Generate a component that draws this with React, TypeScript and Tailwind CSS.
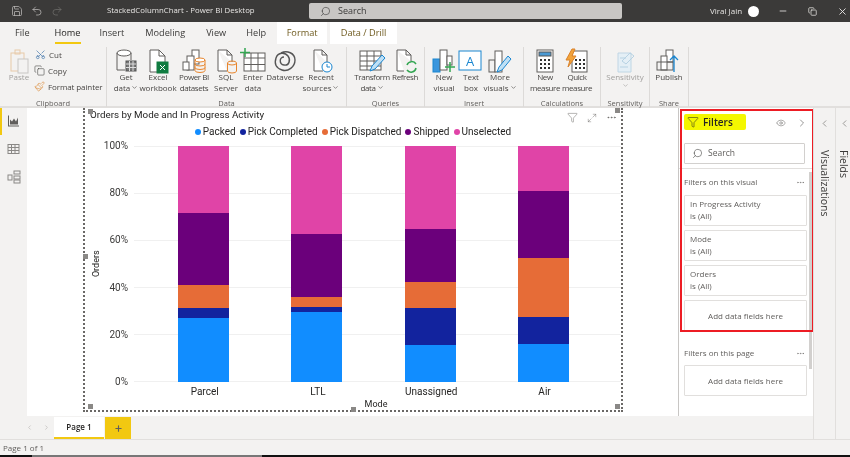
import React from 'react';
import { Minus, Redo2, Search, Undo2, X, Save, Copy, ChevronLeft, ChevronRight, ChevronDown, Eye, Filter, Scissors, Paintbrush, Plus, MoreHorizontal, Maximize2 } from 'lucide-react';

const font = { fontFamily: '"Open Sans", "Noto Sans", sans-serif' };

const PACKED = '#118dff';
const PICK_DONE = '#12239e';
const PICK_DISP = '#e66c37';
const SHIPPED = '#6b007b';
const UNSEL = '#e044a7';

const bars = [
  { name: 'Parcel', seg: [67, 72, 23, 10, 64] },
  { name: 'LTL', seg: [88, 63, 10, 5, 70] },
  { name: 'Unassigned', seg: [83, 53, 26, 37, 37] },
  { name: 'Air', seg: [45, 67, 59, 27, 38] },
];
const segColors = [UNSEL, SHIPPED, PICK_DISP, PICK_DONE, PACKED];

const legend = [
  { label: 'Packed', color: PACKED },
  { label: 'Pick Completed', color: PICK_DONE },
  { label: 'Pick Dispatched', color: PICK_DISP },
  { label: 'Shipped', color: SHIPPED },
  { label: 'Unselected', color: UNSEL },
];

const Ico = ({ children }: { children: React.ReactNode }) => (
  <svg width="28" height="26" viewBox="0 0 28 26" fill="none" stroke="#605e5c" strokeWidth="1">{children}</svg>
);

const icons: Record<string, React.ReactNode> = {
  get: (<><ellipse cx="12" cy="5" rx="7" ry="3" fill="#fff" /><path d="M5 5v17h8M19 5v7" /><rect x="14" y="13" width="10" height="10" fill="#777" stroke="#555" /><path d="M14 16h10M14 19.500h10M17.500 13v10M21 13v10" stroke="#ddd" /></>),
  excel: (<><path d="M6 2h9l6 6v16H6z" fill="#fff" /><path d="M15 2v6h6" /><rect x="13" y="14" width="11" height="11" fill="#107c41" stroke="#107c41" /><path d="M16 17l5 5M21 17l-5 5" stroke="#fff" /></>),
  pbi: (<><rect x="12" y="2" width="7" height="14" fill="#fff" /><rect x="7" y="8" width="7" height="14" fill="#fff" /><rect x="3" y="14" width="6" height="8" fill="#fff" /><ellipse cx="20" cy="12" rx="5" ry="2" fill="#fff" stroke="#e8852c" /><path d="M15 12v10.500a5 2 0 0 0 10 0V12M15 16a5 2 0 0 0 10 0M15 19.500a5 2 0 0 0 10 0" stroke="#e8852c" /></>),
  sql: (<><path d="M6 2h9l5 5v7M6 2v21h9M15 2v5h5" fill="#fff" /><ellipse cx="20" cy="15" rx="4.500" ry="2" stroke="#e8852c" /><path d="M15.500 15v8a4.500 2 0 0 0 9 0v-8" stroke="#e8852c" /></>),
  enter: (<><rect x="5" y="5" width="21" height="18" fill="#fff" /><path d="M5 10h21M5 16.500h21M12 5v18M19 5v18" /><path d="M6 0v9M1 4.500h10" stroke="#33a652" strokeWidth="1.500" /></>),
  dv: (<><path d="M10 5c6-3 14 0 14 7s-7 12-13 10S3 16 5 10s9-6 12-2 1 10-4 9-5-8 0-8" strokeWidth="1.400" stroke="#555" /></>),
  recent: (<><path d="M7 2h8l5 5v7M7 2v21h9M15 2v5h5" fill="#fff" /><circle cx="20" cy="19" r="5" fill="#fff" stroke="#1a86d0" /><path d="M20 16v3h3" stroke="#1a86d0" /></>),
  transform: (<><rect x="2" y="3" width="21" height="19" fill="#fff" /><path d="M2 8h21M2 13h21M2 18h21M9 3v19M16 3v19" /><path d="M12 23l2-5 10-11 3 3-10 11z" fill="#bfe0f5" stroke="#1a86d0" /></>),
  refresh: (<><path d="M6 2h9l5 5v6M6 2v21h7M15 2v5h5" fill="#fff" /><path d="M16 17a5 5 0 0 1 9-1M25 20a5 5 0 0 1-9 2" stroke="#33a652" strokeWidth="1.500" /></>),
  newv: (<><rect x="3" y="11" width="7" height="13" fill="#3a96dd" stroke="#1a86d0" /><rect x="10" y="2" width="7" height="20" fill="#fff" /><rect x="17" y="8" width="5" height="9" fill="#fff" /><path d="M20 14v10M15 19h10" stroke="#33a652" strokeWidth="1.500" /></>),
  text: (<><rect x="2" y="3" width="22" height="19" fill="#fff" stroke="#1a86d0" /><text x="13" y="18" textAnchor="middle" fontSize="13" fill="#1a86d0" stroke="none">A</text></>),
  more: (<><rect x="3" y="12" width="6" height="12" /><rect x="9" y="3" width="7" height="21" fill="#fff" /><path d="M11 24l2-5 9-11 3 3-9 11z" fill="#bfe0f5" stroke="#1a86d0" /></>),
  calc: (<><rect x="6" y="2" width="16" height="22" fill="#fff" /><rect x="8" y="4" width="12" height="4" fill="#4a9ad4" stroke="#555" /><path d="M9 12h2M13 12h2M17 12h2M9 16h2M13 16h2M17 16h2M9 20h2M13 20h2M17 20h2" stroke="#333" strokeWidth="2" /></>),
  quick: (<><rect x="9" y="3" width="15" height="21" fill="#fff" /><path d="M12 12h2M16 12h2M20 12h2M12 16h2M16 16h2M20 16h2M12 20h2M16 20h2M20 20h2" stroke="#333" strokeWidth="2" /><path d="M9 1L3 12h4l-2 7 8-11H9l3-7z" fill="#f2a33a" stroke="#d9822b" /></>),
  sens: (<><path d="M7 5h13v19H7z" fill="#e4eff6" stroke="#c0d6e4" /><path d="M11 13l8-8 4 3-8 8zM9 10h6M9 19h8" stroke="#b7d2e3" /></>),
  publish: (<><rect x="11" y="2" width="7" height="12" fill="#fff" /><rect x="6" y="8" width="6" height="14" fill="#fff" /><rect x="2" y="14" width="16" height="8" /><path d="M19 24V8M15 12l4-4 4 4" stroke="#1a86d0" strokeWidth="1.300" /></>),
};

const Item = ({ w, icon, lines, dim, chevron, tight }: { w: number; icon: string; lines: string[]; dim?: boolean; chevron?: boolean; tight?: boolean }) => (
  <div className="flex flex-col items-center shrink-0" style={{ width: w }}>
    <div className="h-[26px] flex items-center justify-center">
      <Ico>{icons[icon]}</Ico>
    </div>
    <div className={`-mt-[3px] text-[8px] leading-[11px] text-center whitespace-nowrap ${dim ? 'text-[#a19f9d]' : 'text-[#484644]'} ${tight ? 'tracking-[-0.4px]' : ''}`}>
      {lines.map((l, i) => (
        <div key={i} className="flex items-center justify-center gap-[1px]">
          {l}
          {chevron && i === lines.length - 1 && <ChevronDown size={7} strokeWidth={2} />}
        </div>
      ))}
    </div>
  </div>
);

const Group = ({ w, label, pl, children }: { w: number; label: string; pl: number; children: React.ReactNode }) => (
  <div className="flex flex-col border-r border-[#dcdad8] mt-[3px] h-[60px] shrink-0" style={{ width: w }}>
    <div className="flex flex-1 pt-[1px]" style={{ paddingLeft: pl }}>{children}</div>
    <div className="text-[7.500px] leading-[9px] text-center text-[#605e5c] -mb-[1px]">{label}</div>
  </div>
);

const FilterCard = ({ a, b }: { a: string; b: string }) => (
  <div className="h-[31px] bg-white border border-[#e1dfdd] rounded-[1px] px-[5px] pt-[2px] text-[8px] leading-[12px] text-[#605e5c] mb-[4px]">
    <div>{a}</div>
    <div>{b}</div>
  </div>
);

const AddCard = ({ h }: { h: string }) => (
  <div className={`${h} bg-white border border-[#e1dfdd] rounded-[1px] flex items-center justify-center text-[8px] text-[#605e5c]`}>
    Add data fields here
  </div>
);

const Handle = ({ className }: { className: string }) => (
  <div className={`absolute w-[5px] h-[5px] bg-[#8a8886] ${className}`} />
);

const Chart = () => (
  <div className="relative w-[540px] h-[304px] ml-[56px] border-2 border-t-0 border-dotted border-[#6a6866] flex flex-col" style={{ fontFamily: 'Roboto, "Open Sans", sans-serif' }}>
    <Handle className="left-[3px] top-[1px]" />
    <Handle className="left-[3px] bottom-[1px]" />
    <Handle className="right-[1px] top-[0px]" />
    <Handle className="right-[1px] bottom-[1px]" />
    <Handle className="left-[266px] -bottom-[2px]" />
    <Handle className="-left-[2px] top-[146px]" />
    <div className="absolute right-[4px] top-[4px] flex items-center gap-[9px] text-[#605e5c]">
      <Filter size={11} strokeWidth={1} />
      <Maximize2 size={10} strokeWidth={1} />
      <MoreHorizontal size={11} strokeWidth={1.500} />
    </div>
    <div className="pl-[5px] text-[9.800px] leading-[13px] text-[#252423]">Orders by Mode and In Progress Activity</div>
    <div className="flex justify-center gap-[4px] mt-[3px] h-[15px] items-center text-[10px] text-[#252423]">
      {legend.map(l => (
        <div key={l.label} className="flex items-center gap-[2px]">
          <span className="w-[6px] h-[6px] rounded-full" style={{ background: l.color }} />
          {l.label}
        </div>
      ))}
    </div>
    <div className="flex mt-[7px] pl-[6px]">
      <div className="w-[10px] flex items-center justify-center h-[236px]">
        <span className="-rotate-90 text-[9px] text-[#252423]">Orders</span>
      </div>
      <div className="w-[27px] h-[236px] flex flex-col justify-between items-end text-[10px] leading-[0px] text-[#3b3a39]">
        {['100%', '80%', '60%', '40%', '20%', '0%'].map(t => <span key={t}>{t}</span>)}
      </div>
      <div className="relative ml-[6px] w-[487px] h-[236px]">
        <div className="absolute inset-0 flex flex-col justify-between">
          {[0, 1, 2, 3, 4, 5].map(i => <div key={i} className="h-px bg-[#f0f0f0]" />)}
        </div>
        <div className="relative flex pl-[13px]">
          {bars.map(b => (
            <div key={b.name} className="w-[113.300px] flex justify-center">
              <div className="w-[51px] flex flex-col">
                {b.seg.map((h, i) => <div key={i} style={{ height: h, background: segColors[i] }} />)}
              </div>
            </div>
          ))}
        </div>
      </div>
    </div>
    <div className="flex pl-[63px] mt-[3px] text-[10px] leading-[14px] text-[#252423]">
      {bars.map(b => <div key={b.name} className="w-[113.300px] text-center">{b.name}</div>)}
    </div>
    <div className="text-center text-[9px] leading-[11px] text-[#252423] pl-[46px]">Mode</div>
  </div>
);

export default function App() {
  return (
    <div className="w-[850px] h-[457px] flex flex-col overflow-hidden bg-[#f3f2f1] blur-[0.25px]" style={font}>
      {/* title bar */}
      <div className="h-[22px] bg-[#3b3a39] flex items-center text-[#e6e4e2] shrink-0">
        <div className="flex items-center gap-[8px] ml-[11px] w-[96px]">
          <Save size={12} strokeWidth={1.500} color="#bdbbb9" />
          <Undo2 size={12} strokeWidth={1.500} color="#bdbbb9" />
          <Redo2 size={12} strokeWidth={1.500} color="#6f6d6b" />
        </div>
        <div className="text-[7.800px] w-[202px] whitespace-nowrap">StackedColumnChart - Power BI Desktop</div>
        <div className="w-[313px] h-[16px] bg-[#c8c6c4] rounded-[2px] flex items-center pl-[11px] gap-[7px] text-[#3b3a39] text-[9px]">
          <Search size={11} strokeWidth={1.300} className="-scale-x-100" />
          Search
        </div>
        <div className="ml-[88px] text-[8px] w-[38px] whitespace-nowrap">Viral Jain</div>
        <div className="w-[11px] h-[11px] rounded-full bg-white" />
        <Minus size={10} className="ml-[19px]" />
        <Copy size={9} className="ml-[20px]" />
        <X size={11} className="ml-[20px]" />
      </div>

      {/* tabs */}
      <div className="h-[22px] flex items-stretch text-[9.200px] text-[#3b3a39] shrink-0 bg-[#f3f2f1]">
        <div className="ml-[15px] flex items-center">File</div>
        <div className="ml-[25px] flex items-center relative font-medium text-[#252423]">
          Home
          <div className="absolute left-0 right-0 bottom-0 h-[2px] bg-[#f2c811]" />
        </div>
        <div className="ml-[19px] flex items-center">Insert</div>
        <div className="ml-[21px] flex items-center">Modeling</div>
        <div className="ml-[21px] flex items-center">View</div>
        <div className="ml-[20px] flex items-center">Help</div>
        <div className="ml-[11px] w-[50px] bg-white flex items-center justify-center text-[#6e5a1e] font-medium">Format</div>
        <div className="ml-[3px] w-[67px] bg-white flex items-center justify-center text-[#6e5a1e] font-medium">Data / Drill</div>
      </div>

      {/* ribbon */}
      <div className="h-[64px] flex shrink-0 bg-[#f3f2f1] border-b-2 border-[#e1dfdd]">
        <Group w={107} label="Clipboard" pl={5}>
          <div className="w-[28px] flex flex-col items-center">
            <svg width="22" height="26" viewBox="0 0 22 26" fill="none" stroke="#e8c9a8"><rect x="3" y="5" width="13" height="18" /><rect x="7" y="2" width="5" height="4" /><rect x="10" y="11" width="10" height="14" fill="#f3f2f1" stroke="#c8c6c4" /></svg>
            <div className="text-[8px] leading-[11px] -mt-[3px] text-[#a19f9d]">Paste</div>
          </div>
          <div className="flex flex-col gap-[2.500px] text-[8px] leading-[13.500px] text-[#484644] whitespace-nowrap pl-[1px]">
            <div className="flex items-center gap-[3px]"><Scissors size={11} strokeWidth={1.200} color="#1f5e9e" className="ml-[1px] -rotate-90" />Cut</div>
            <div className="flex items-center gap-[3px]"><Copy size={11} strokeWidth={1.200} color="#3b3a39" />Copy</div>
            <div className="flex items-center gap-[3px] tracking-[-0.1px]"><Paintbrush size={11} strokeWidth={1.200} color="#d9822b" />Format painter</div>
          </div>
        </Group>
        <Group w={240} label="Data" pl={3}>
          <Item w={32} icon="get" lines={['Get', 'data']} chevron />
          <Item w={32} icon="excel" lines={['Excel', 'workbook']} />
          <Item w={40} icon="pbi" lines={['Power BI', 'datasets']} tight />
          <Item w={24} icon="sql" lines={['SQL', 'Server']} />
          <Item w={30} icon="enter" lines={['Enter', 'data']} />
          <Item w={34} icon="dv" lines={['Dataverse']} />
          <Item w={38} icon="recent" lines={['Recent', 'sources']} chevron />
        </Group>
        <Group w={78} label="Queries" pl={7}>
          <Item w={36} icon="transform" lines={['Transform', 'data']} chevron tight />
          <Item w={30} icon="refresh" lines={['Refresh']} tight />
        </Group>
        <Group w={99} label="Insert" pl={5}>
          <Item w={28} icon="newv" lines={['New', 'visual']} />
          <Item w={26} icon="text" lines={['Text', 'box']} />
          <Item w={32} icon="more" lines={['More', 'visuals']} chevron />
        </Group>
        <Group w={77} label="Calculations" pl={5}>
          <Item w={32} icon="calc" lines={['New', 'measure']} tight />
          <Item w={32} icon="quick" lines={['Quick', 'measure']} tight />
        </Group>
        <Group w={49} label="Sensitivity" pl={4}>
          <Item w={40} icon="sens" lines={['Sensitivity', '']} dim chevron />
        </Group>
        <Group w={39} label="Share" pl={5}>
          <Item w={28} icon="publish" lines={['Publish']} />
        </Group>
      </div>

      {/* main */}
      <div className="flex flex-1 min-h-0">
        <div className="flex-1 flex flex-col min-w-0">
          <div className="h-[308px] flex shrink-0">
            <div className="w-[27px] shrink-0 flex flex-col items-center gap-[9px] pt-[3px] relative">
              <div className="absolute left-0 top-0 w-[2px] h-[27px] bg-[#f2c811]" />
              <svg width="13" height="20" viewBox="0 0 13 13" fill="#605e5c"><path d="M1 1h1v10h10v1H1zM3 5l2 2 2-3 2 3 2-4v7H3z" /></svg>
              <svg width="13" height="18" viewBox="0 0 13 13" fill="none" stroke="#8a8886"><rect x="1" y="2" width="11" height="9" /><path d="M1 5h11M1 8h11M4.500 2v9M8 2v9" /></svg>
              <svg width="14" height="20" viewBox="0 0 14 14" fill="none" stroke="#8a8886"><rect x="1" y="5" width="4" height="5" /><rect x="7" y="1" width="6" height="3" /><rect x="7" y="6" width="6" height="3" /><rect x="7" y="10" width="6" height="3" /></svg>
            </div>
            <div className="w-[651px] shrink-0 bg-white">
              <Chart />
            </div>
            {/* filter pane */}
            <div className="relative flex-1 bg-white border-l border-[#c8c6c4] overflow-hidden flex flex-col">
              <div className="absolute left-[1px] top-[1px] w-[134px] h-[223px] border-2 border-[#ed1c24] z-10" />
              <div className="h-[35px] pl-[5px] pt-[6px] flex items-start justify-between shrink-0">
                <div className="flex items-center gap-[4px] bg-[#f4f700] h-[16px] w-[62px] pl-[3px] rounded-[2px]">
                  <Filter size={12} strokeWidth={1.100} color="#252423" />
                  <span className="text-[10px] font-semibold text-[#252423]">Filters</span>
                </div>
                <div className="flex items-center gap-[10px] h-[17px] pr-[5px] text-[#605e5c]">
                  <Eye size={10} strokeWidth={1.200} />
                  <ChevronRight size={12} strokeWidth={1.300} />
                </div>
              </div>
              <div className="mx-[5px] w-[121px] h-[21px] border border-[#d2d0ce] rounded-[1px] flex items-center pl-[7px] gap-[5px] text-[8.500px] text-[#605e5c] shrink-0">
                <Search size={11} strokeWidth={1.200} className="-scale-x-100" color="#3b3a39" />
                Search
              </div>
              <div className="h-px bg-[#e1dfdd] mt-[4px] shrink-0" />
              <div className="absolute right-[1px] top-[64px] w-[3px] h-[197px] bg-[#d2d0ce]" />
              <div className="pl-[5px] pr-[6px] flex flex-col">
                <div className="flex justify-between items-center h-[26px] text-[8px] text-[#605e5c]">
                  Filters on this visual
                  <MoreHorizontal size={9} strokeWidth={1.200} className="mr-[2px]" />
                </div>
                <FilterCard a="In Progress Activity" b="is (All)" />
                <FilterCard a="Mode" b="is (All)" />
                <FilterCard a="Orders" b="is (All)" />
                <AddCard h="h-[32px] shrink-0" />
                <div className="flex justify-between items-center h-[31px] mt-[2px] pt-[7px] text-[8px] text-[#605e5c]">
                  Filters on this page
                  <MoreHorizontal size={9} strokeWidth={1.200} className="mr-[2px]" />
                </div>
                <AddCard h="h-[31px] shrink-0" />
                <div className="mt-[17px] text-[8px] text-[#605e5c] whitespace-nowrap">Filters on all pages</div>
              </div>
            </div>
          </div>
          {/* page tabs */}
          <div className="h-[23px] flex shrink-0 items-stretch">
            <div className="w-[54px] flex items-center justify-end gap-[10px] pr-[4px] text-[#c8c6c4]">
              <ChevronLeft size={7} strokeWidth={3} />
              <ChevronRight size={7} strokeWidth={3} />
            </div>
            <div className="w-[50px] mt-[1px] bg-white border-b-2 border-[#f2c811] flex items-center justify-center text-[8px] font-semibold text-[#252423]">Page 1</div>
            <div className="w-[26px] ml-[1px] mt-[1px] bg-[#f2c811] flex items-center justify-center">
              <Plus size={9} strokeWidth={3} color="#605e5c" />
            </div>
          </div>
        </div>
        {/* collapsed panes */}
        <div className="w-[22px] shrink-0 border-l border-[#e1dfdd] flex flex-col items-center pt-[10px] gap-[21px] h-[331px]">
          <ChevronLeft size={11} strokeWidth={1.300} color="#605e5c" />
          <span className="[writing-mode:vertical-rl] text-[10.500px] leading-[12px] text-[#3b3a39]">Visualizations</span>
        </div>
        <div className="w-[15px] shrink-0 border-l border-[#e1dfdd] flex flex-col items-center pl-[2px] pt-[10px] gap-[21px] h-[331px]">
          <ChevronLeft size={11} strokeWidth={1.300} color="#605e5c" />
          <span className="[writing-mode:vertical-rl] text-[10.500px] leading-[12px] text-[#3b3a39]">Fields</span>
        </div>
      </div>

      {/* status */}
      <div className="h-[16px] border-t border-[#e1dfdd] pl-[3px] flex items-center text-[8px] text-[#605e5c] shrink-0">Page 1 of 1</div>
      <div className="h-[2px] flex shrink-0">
        <div className="w-[32px] bg-[#111]" />
        <div className="w-[230px] bg-[#777]" />
        <div className="flex-1 bg-[#111]" />
      </div>
    </div>
  );
}
